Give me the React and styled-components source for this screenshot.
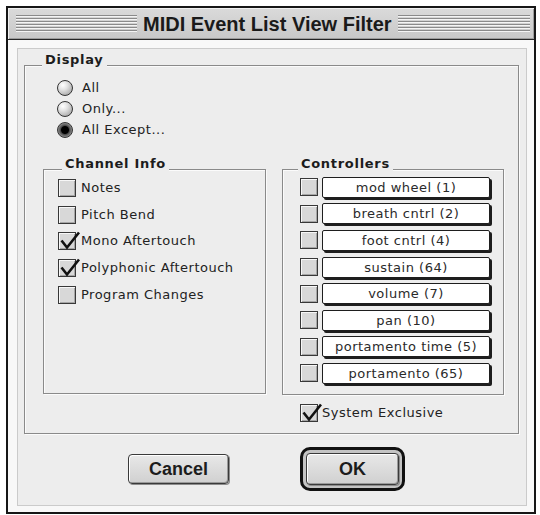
import React from "react";
import styled, { createGlobalStyle } from "styled-components";

const Global = createGlobalStyle`
  html, body { margin: 0; padding: 0; background: #ffffff; }
  body { font-family: "DejaVu Sans", Verdana, sans-serif; }
  * { box-sizing: border-box; }
`;

const Window = styled.div`
  margin: 6px 0 0 6px;
  width: 530px;
  height: 508px;
  border: 2px solid #161616;
  display: flex;
  flex-direction: column;
  background: #f7f7f7;
`;

const TitleBar = styled.div`
  height: 32px;
  flex: none;
  border-bottom: 1px solid #262626;
  background: linear-gradient(#dadada, #c8c8c8);
  box-shadow: inset 1px 1px 0 #f0f0f0, inset -1px -1px 0 #9c9c9c;
  display: flex;
  align-items: center;
  padding: 0 4px 0 8px;
`;

const Stripes = styled.div`
  height: 17px;
  ${(p) => (p.$w ? `width: ${p.$w}px; flex: none;` : "flex: 1;")}
  background: repeating-linear-gradient(
    to bottom,
    #8a8a8a 0 1px,
    #f4f4f4 1px 2px,
    transparent 2px 3px
  );
`;

const Title = styled.div`
  margin: 0 6px;
  font-family: "Liberation Sans", Arial, sans-serif;
  font-weight: bold;
  font-size: 20px;
  line-height: 24px;
  color: #1a1a1a;
  white-space: nowrap;
`;

const Frame = styled.div`
  flex: 1;
  display: flex;
  padding: 8px 7px 6px 9px;
  background: #f8f8f8;
`;

const Panel = styled.div`
  flex: 1;
  border: 1px solid #cbcbcb;
  background: #ededed;
  padding: 16px 6px 0 6px;
  display: flex;
  flex-direction: column;
`;

const GroupBox = styled.div`
  position: relative;
  width: ${(p) => p.$w}px;
  height: ${(p) => p.$h}px;
  border: 1px solid #8a8a8a;
  box-shadow: inset 1px 1px 0 #fbfbfb, 1px 1px 0 #fbfbfb;
  padding: ${(p) => p.$pad};
  flex: none;
`;

const Legend = styled.div`
  position: absolute;
  left: ${(p) => p.$left}px;
  top: -14px;
  padding: 0 3px;
  background: #ededed;
  font-weight: bold;
  font-size: 13px;
  letter-spacing: 0.7px;
  line-height: 16px;
  color: #1c1c1c;
`;

const RadioList = styled.div`
  margin-left: 14px;
  display: flex;
  flex-direction: column;
`;

const OptionRow = styled.div`
  display: flex;
  align-items: center;
  height: ${(p) => p.$h}px;
  gap: ${(p) => p.$gap}px;
`;

const Radio = styled.span`
  flex: none;
  width: 16px;
  height: 16px;
  border-radius: 50%;
  border: 1px solid #333;
  background: ${(p) =>
    p.$on
      ? "radial-gradient(circle at 50% 50%, #000 0 3.5px, #4a4a4a 4.5px, #8e8e8e 7px)"
      : "radial-gradient(circle at 35% 30%, #ffffff 0, #e2e2e2 35%, #a6a6a6 85%)"};
`;

const Label = styled.span`
  font-size: 13px;
  letter-spacing: 0.5px;
  color: #222;
  white-space: nowrap;
  line-height: 16px;
`;

const Columns = styled.div`
  display: flex;
  gap: 16px;
  margin-top: 29px;
`;

const Column = styled.div`
  display: flex;
  flex-direction: column;
`;

const CheckBox = styled.span`
  position: relative;
  flex: none;
  width: 18px;
  height: 18px;
  border: 1px solid #383838;
  background: #d8d8d8;
  box-shadow: inset 1px 1px 0 #f7f7f7, inset -1px -1px 0 #a6a6a6;
`;

const Tick = styled.svg`
  position: absolute;
  left: 0;
  top: -1px;
  width: 21px;
  height: 18px;
  overflow: visible;
`;

const Field = styled.div`
  width: 168px;
  height: 21px;
  border: 1px solid #1e1e1e;
  border-radius: 2px;
  background: #ffffff;
  box-shadow: 2px 2px 0 #1e1e1e;
  display: flex;
  align-items: center;
  justify-content: center;
  font-size: 13px;
  letter-spacing: 0.5px;
  color: #2a2a2a;
  white-space: nowrap;
`;

const SysRow = styled.div`
  display: flex;
  align-items: center;
  gap: 4px;
  height: 18px;
  margin-top: 9px;
  padding-left: 18px;
`;

const ButtonRow = styled.div`
  height: 70px;
  display: flex;
  align-items: center;
  padding-left: 104px;
  gap: 71px;
`;

const Button = styled.button`
  width: ${(p) => p.$w}px;
  height: ${(p) => p.$h}px;
  padding: 0;
  border: 1px solid #3a3a3a;
  border-radius: 4px;
  background: linear-gradient(#e8e8e8, #d0d0d0);
  box-shadow: inset 1px 1px 0 #ffffff, inset -1px -1px 0 #9a9a9a, 1px 1px 0 #8c8c8c;
  font-family: "Liberation Sans", Arial, sans-serif;
  font-weight: bold;
  font-size: 18px;
  color: #1c1c1c;
`;

const DefaultRing = styled.div`
  width: 105px;
  height: 44px;
  border: 3px solid #111;
  border-radius: 10px;
  padding: 3px;
  background: #c4c4c4;
  display: flex;
`;

const Check = ({ on }) => (
  <CheckBox>
    {on && (
      <Tick viewBox="0 0 21 18">
        <path d="M2.5 8.5 L8 15.5 L20 0.5" fill="none" stroke="#111" strokeWidth="2.6" strokeLinejoin="miter" />
      </Tick>
    )}
  </CheckBox>
);

const channelItems = [
  ["Notes", false],
  ["Pitch Bend", false],
  ["Mono Aftertouch", true],
  ["Polyphonic Aftertouch", true],
  ["Program Changes", false],
];

const controllers = [
  "mod wheel (1)",
  "breath cntrl (2)",
  "foot cntrl (4)",
  "sustain (64)",
  "volume (7)",
  "pan (10)",
  "portamento time (5)",
  "portamento (65)",
];

const radios = [
  ["All", false],
  ["Only...", false],
  ["All Except...", true],
];

export default function App() {
  return (
    <>
      <Global />
      <Window>
        <TitleBar>
          <Stripes $w={121} />
          <Title>MIDI Event List View Filter</Title>
          <Stripes />
        </TitleBar>
        <Frame>
          <Panel>
            <GroupBox $w={495} $h={369} $pad="11px 0 0 18px">
              <Legend $left={17}>Display</Legend>
              <RadioList>
                {radios.map(([t, on]) => (
                  <OptionRow key={t} $h={21} $gap={9}>
                    <Radio $on={on} />
                    <Label>{t}</Label>
                  </OptionRow>
                ))}
              </RadioList>
              <Columns>
                <Column>
                  <GroupBox $w={223} $h={225} $pad="5px 0 0 14px">
                    <Legend $left={18}>Channel Info</Legend>
                    {channelItems.map(([t, on]) => (
                      <OptionRow key={t} $h={26.6} $gap={5}>
                        <Check on={on} />
                        <Label>{t}</Label>
                      </OptionRow>
                    ))}
                  </GroupBox>
                </Column>
                <Column>
                  <GroupBox $w={222} $h={226} $pad="4px 0 0 17px">
                    <Legend $left={15}>Controllers</Legend>
                    {controllers.map((t) => (
                      <OptionRow key={t} $h={26.6} $gap={4}>
                        <Check on={false} />
                        <Field>{t}</Field>
                      </OptionRow>
                    ))}
                  </GroupBox>
                  <SysRow>
                    <Check on={true} />
                    <Label>System Exclusive</Label>
                  </SysRow>
                </Column>
              </Columns>
            </GroupBox>
            <ButtonRow>
              <Button $w={101} $h={30}>Cancel</Button>
              <DefaultRing>
                <Button $w={93} $h={32}>OK</Button>
              </DefaultRing>
            </ButtonRow>
          </Panel>
        </Frame>
      </Window>
    </>
  );
}
